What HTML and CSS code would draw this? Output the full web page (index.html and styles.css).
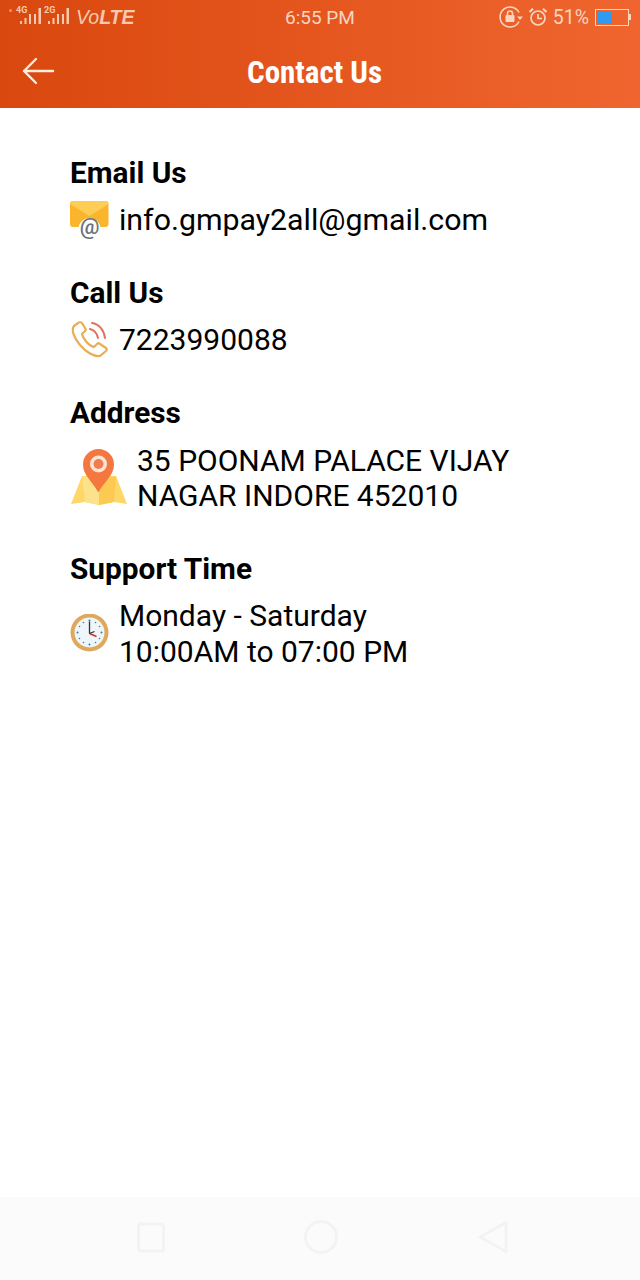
FILE: index.html
```html
<!DOCTYPE html>
<html lang="en">
<head>
    <meta name="viewport" content="width=device-width, initial-scale=1.0">
    <title>Contact Us</title>
    <link rel="stylesheet" href="styles.css">
</head>
<body>
    <header class="app-header">
        <div class="status-bar">
            <div class="status-left">
                <svg class="signal" width="72" height="34" viewBox="0 0 72 34">
                    <g fill="#f7c9ae">
                        <circle cx="10.500" cy="10.500" r="1.500" opacity=".6"/>
                        <text x="16" y="13" font-size="9" font-family="Roboto" font-weight="700">4G</text>
                        <rect x="20" y="21" width="2" height="3"/><rect x="24.500" y="18" width="2" height="6"/><rect x="29" y="14" width="2" height="10"/><rect x="34" y="14" width="2" height="10"/><rect x="38.500" y="8" width="2.500" height="16"/>
                        <text x="44" y="13" font-size="9" font-family="Roboto" font-weight="700">2G</text>
                        <rect x="48" y="21" width="2" height="3"/><rect x="52.500" y="18" width="2" height="6"/><rect x="57" y="14" width="2" height="10"/><rect x="62" y="14" width="2" height="10"/><rect x="66.500" y="8" width="2.500" height="16"/>
                    </g>
                </svg>
                <span class="volte">Vo<b>LTE</b></span>
            </div>
            <span class="clock">6:55 PM</span>
            <div class="status-right">
                <svg width="24" height="24" viewBox="0 0 24 24" fill="none" stroke="#f7d5c1" stroke-width="1.600">
                    <path d="M20 7.500a10 10 0 1 0 0 9"/>
                    <path d="M18 11.500h6l-3 3.500z" fill="#f7d5c1" stroke="none"/>
                    <rect x="6.500" y="10" width="9" height="7" rx="1" fill="#f7d5c1" stroke="none"/>
                    <path d="M8.500 10V8.500a2.500 2.500 0 0 1 5 0V10"/>
                </svg>
                <svg width="20" height="20" viewBox="0 0 20 20" fill="none" stroke="#f7d5c1" stroke-width="1.700">
                    <circle cx="10" cy="11" r="7"/>
                    <path d="M10 7v4.500h4"/>
                    <path d="M1.500 5 5 1.800M18.500 5 15 1.800" stroke-width="2.200"/>
                </svg>
                <span class="battery-text">51%</span>
                <div class="battery"><div class="battery-fill"></div></div>
                <div class="battery-tip"></div>
            </div>
        </div>
        <div class="title-bar">
            <svg class="back" width="34" height="30" viewBox="0 0 34 30" fill="none" stroke="#fdebe0" stroke-width="2.400" stroke-linecap="round" stroke-linejoin="round">
                <path d="M32 15H3M15 3 3 15l12 12"/>
            </svg>
            <h1>Contact Us</h1>
        </div>
    </header>

    <main class="content">
        <section class="block">
            <h2>Email Us</h2>
            <div class="row">
                <svg class="icon" width="40" height="38" viewBox="0 0 40 38">
                    <rect x="0" y="0" width="38.500" height="26" rx="3" fill="#fbb52c"/>
                    <path d="M0 3q0-3 3-3h32.500q3 0 3 3L19.500 15z" fill="#fdcd55"/>
                    <circle cx="19.500" cy="28" r="11" fill="#fff"/>
                    <text class="at-sign" x="19.500" y="33">@</text>
                </svg>
                <span class="email">info.gmpay2all@gmail.com</span>
            </div>
        </section>

        <section class="block">
            <h2>Call Us</h2>
            <div class="row">
                <svg class="icon" width="40" height="38" viewBox="0 0 40 38" fill="none" stroke-linecap="round">
                    <path d="M8 2 4 5C1 9 4 17 10 24s14 12 20 11l6-5c1-1 1-2 0-3l-6-4c-1-1-2-1-3 0l-3 3c-5-1-11-8-12-13l3-3c1-1 1-2 0-3L12 2C11 1 9 1 8 2z" stroke="#e9ae55" stroke-width="2.200" stroke-linejoin="round"/>
                    <path d="M20 8c4 1 7 4 8 9" stroke="#dd7560" stroke-width="2"/>
                    <path d="M22 2c7 1 12 7 13 15" stroke="#dd7560" stroke-width="2"/>
                </svg>
                <span>7223990088</span>
            </div>
        </section>

        <section class="block block-address">
            <h2>Address</h2>
            <div class="row row-address">
                <svg class="icon-map" width="58" height="58" viewBox="0 0 58 58">
                    <path d="M12 27 1 55l14-2 14 3 15-3 13 2-11-28z" fill="#fed768"/>
                    <path d="M12 27 15 53l14 3V32z" fill="#fde28c"/>
                    <path d="M46 27 44 53 29 56V32z" fill="#fcca52"/>
                    <path d="M28 43C22 32 13 26 13 15.500a15.500 15.500 0 0 1 31 0C44 26 35 32 28.500 43z" fill="#f4773f"/>
                    <circle cx="28.500" cy="15" r="8.500" fill="#fde4d4"/>
                    <circle cx="28.500" cy="15" r="5" fill="#ee7d51"/>
                </svg>
                <p>35 POONAM PALACE VIJAY<br>NAGAR INDORE 452010</p>
            </div>
        </section>

        <section class="block">
            <h2>Support Time</h2>
            <div class="row row-time">
                <svg class="icon" width="40" height="40" viewBox="0 1.500 40 40">
                    <circle cx="19.500" cy="20" r="19" fill="#dfa95c"/>
                    <circle cx="19.500" cy="20" r="15" fill="#eef6fa"/>
                    <g fill="#48739c">
                        <circle cx="19.500" cy="8" r="1"/><circle cx="19.500" cy="32" r="1"/><circle cx="7.500" cy="20" r="1"/><circle cx="31.500" cy="20" r="1"/>
                        <circle cx="13.500" cy="10" r=".8"/><circle cx="25.500" cy="10" r=".8"/><circle cx="13.500" cy="30" r=".8"/><circle cx="25.500" cy="30" r=".8"/>
                        <circle cx="9.500" cy="14" r=".8"/><circle cx="29.500" cy="14" r=".8"/><circle cx="9.500" cy="26" r=".8"/><circle cx="29.500" cy="26" r=".8"/>
                    </g>
                    <path d="M19.500 9v12" stroke="#333" stroke-width="1.300"/>
                    <path d="M19.500 21l7 3" stroke="#c0392b" stroke-width="1.500"/>
                    <path d="M19.500 21l5-2" stroke="#333" stroke-width="1.300"/>
                </svg>
                <p>Monday - Saturday<br>10:00AM to 07:00 PM</p>
            </div>
        </section>
    </main>

    <nav class="nav-bar">
        <svg width="32" height="32" viewBox="0 0 32 32" fill="none" stroke="#f3f3f3" stroke-width="3"><rect x="3.500" y="3" width="25" height="27" rx="2"/></svg>
        <svg width="36" height="36" viewBox="0 0 36 36" fill="none" stroke="#f3f3f3" stroke-width="3"><circle cx="18" cy="18" r="15.500"/></svg>
        <svg width="34" height="34" viewBox="0 0 34 34" fill="none" stroke="#f3f3f3" stroke-width="3" stroke-linejoin="round"><path d="M32 2.500v29L6 17z"/></svg>
    </nav>
</body>
</html>
```

FILE: styles.css
```css
html, body {
    margin: 0;
    padding: 0;
}
body {
    width: 640px;
    height: 1280px;
    display: flex;
    flex-direction: column;
    font-family: Roboto, "Liberation Sans", sans-serif;
    background: #fff;
    color: #000;
    overflow: hidden;
}
.app-header {
    height: 108px;
    flex: none;
    background: linear-gradient(90deg, #d9480e, #f0652f);
    color: #fff;
}
.status-bar {
    height: 34px;
    display: flex;
    align-items: center;
    padding-right: 9px;
}
.status-left, .status-right {
    display: flex;
    align-items: center;
}
.status-left {
    width: 285px;
}
.volte {
    margin-left: 4px;
    font: italic 19.5px "Liberation Sans", Arial, sans-serif;
    color: #f7c9ae;
}
.volte b {
    font-weight: 700;
}
.clock {
    font-size: 19px;
    color: #f7d5c1;
    flex: 1;
}
.status-right {
    gap: 5px;
    color: #f7d5c1;
}
.battery-text {
    font-size: 19.5px;
    margin-right: 1px;
}
.battery {
    width: 30px;
    height: 13px;
    border: 1px solid #f9dcb8;
    padding: 1px;
}
.battery-fill {
    width: 15px;
    height: 100%;
    background: #2f9bf0;
}
.battery-tip {
    width: 2px;
    height: 6px;
    background: #f7d5c1;
    margin-left: -5px;
}
.title-bar {
    height: 74px;
    display: flex;
    align-items: center;
    padding-left: 21px;
}
.title-bar h1 {
    margin: 2px 0 0 192px;
    font: 700 31px "Roboto Condensed", Roboto, sans-serif;
    color: #fff;
}
.content {
    flex: 1;
    padding: 48px 0 0 70px;
}
.block {
    margin-bottom: 34px;
}
.block-address {
    margin-bottom: 38px;
}
.block h2 {
    margin: 0;
    font-size: 29.8px;
    line-height: 34px;
    font-weight: 700;
}
.row {
    display: flex;
    align-items: center;
    gap: 9px;
    font-size: 30px;
    line-height: 36px;
    margin-top: 8px;
    height: 44px;
}
.row p {
    margin: 0;
}
.email {
    font-size: 30.3px;
}
.at-sign {
    font: 500 22px Roboto, sans-serif;
    fill: #6b7278;
    text-anchor: middle;
}
.row-address {
    height: 72px;
    margin-top: 12px;
    line-height: 35px;
}
.row-time {
    height: 72px;
    margin-top: 12px;
}
.icon, .icon-map {
    flex: none;
}
.nav-bar {
    height: 83px;
    flex: none;
    box-sizing: border-box;
    background: #fbfbfb;
    display: flex;
    align-items: center;
    justify-content: space-between;
    padding: 0 132px 3px 135px;
}
```
